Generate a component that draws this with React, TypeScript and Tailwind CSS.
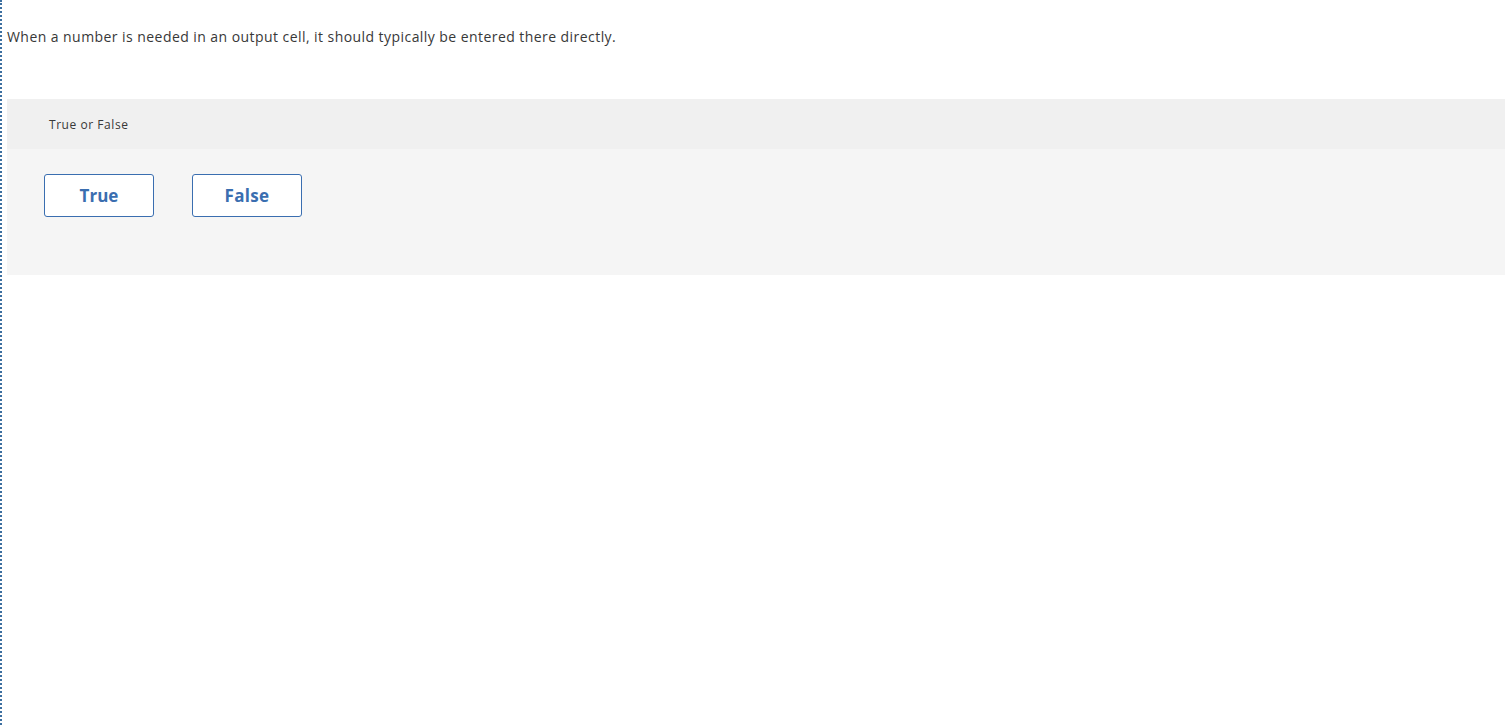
export default function App() {
  return (
    <div className="min-h-[725px] border-l-2 border-dotted border-[#3c6fa0] bg-white pl-[5px] font-['Open_Sans',sans-serif]">
      <p className="pt-[28px] text-[14px] leading-[18px] tracking-[0.44px] text-[#383838]">
        When a number is needed in an output cell, it should typically be entered there directly.
      </p>
      <div className="mt-[53px]">
        <div className="flex h-[50px] items-center bg-[#f0f0f0] pl-[42px] pt-[1px] text-[12px] tracking-[0.55px] text-[#383838]">
          True or False
        </div>
        <div className="flex h-[126px] gap-[38px] bg-[#f5f5f5] pl-[37px] pt-[25px]">
          <button className="h-[43px] w-[110px] rounded-[3px] border border-[#3a6eb0] bg-white text-[17px] font-bold text-[#3a6eb0]">
            True
          </button>
          <button className="h-[43px] w-[110px] rounded-[3px] border border-[#3a6eb0] bg-white text-[17px] font-bold tracking-[0.3px] text-[#3a6eb0]">
            False
          </button>
        </div>
      </div>
    </div>
  );
}
